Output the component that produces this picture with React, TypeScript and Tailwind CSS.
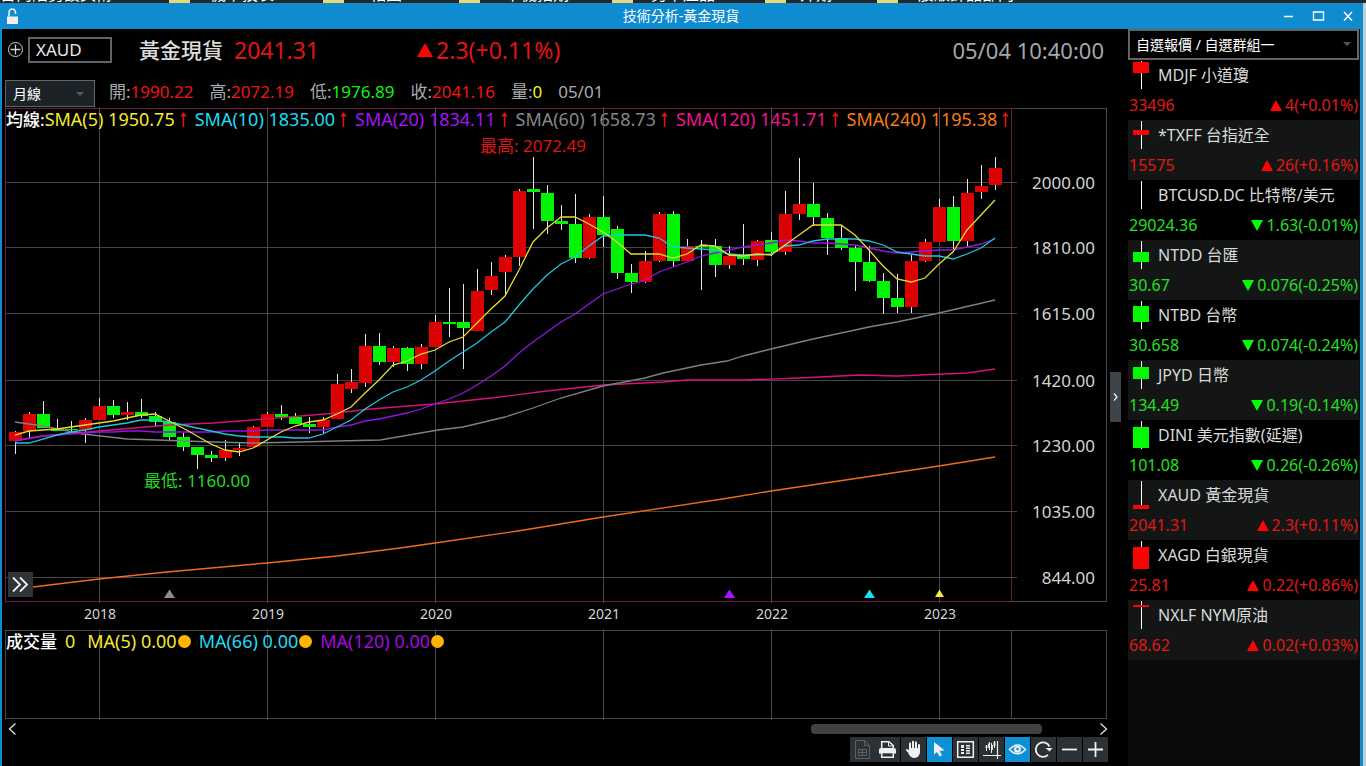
import React from "react";

type Candle = [up: 0 | 1, top: number, bottom: number, high: number, low: number];

const candles: Candle[] = [
  [1, 432, 441, 431, 454], [1, 414, 431, 412, 438], [0, 414, 428, 401, 428], [0, 429, 431, 419, 431],
  [0, 429, 430, 421, 433], [1, 420, 430, 418, 443], [1, 406, 420, 398, 420], [0, 406, 415, 400, 418],
  [1, 412, 415, 402, 420], [0, 412, 416, 399, 418], [0, 416, 422, 412, 427], [0, 422, 437, 418, 440],
  [0, 437, 447, 433, 451], [0, 447, 455, 447, 469], [0, 455, 458, 451, 462], [1, 450, 458, 440, 461],
  [1, 448, 450, 442, 456], [1, 427, 447, 426, 447], [1, 414, 427, 412, 427], [0, 414, 417, 405, 420],
  [0, 417, 424, 413, 424], [0, 424, 427, 417, 433], [1, 420, 427, 417, 433], [1, 384, 419, 374, 419],
  [1, 382, 389, 369, 393], [1, 346, 383, 334, 387], [0, 346, 362, 333, 365], [1, 348, 362, 346, 367],
  [0, 348, 364, 347, 371], [1, 347, 364, 344, 369], [1, 322, 347, 315, 347], [0, 322, 324, 288, 337],
  [0, 322, 328, 284, 369], [1, 291, 331, 269, 331], [1, 276, 290, 262, 295], [1, 257, 272, 255, 295],
  [1, 191, 257, 189, 266], [0, 189, 192, 157, 229], [0, 193, 221, 185, 234], [0, 221, 224, 205, 230],
  [0, 224, 258, 194, 263], [1, 217, 258, 214, 259], [0, 217, 235, 196, 247], [0, 229, 273, 226, 279],
  [0, 273, 282, 264, 293], [1, 261, 282, 251, 283], [1, 214, 261, 212, 262], [0, 214, 261, 211, 267],
  [1, 246, 261, 239, 261], [0, 246, 247, 240, 290], [0, 246, 265, 239, 277], [1, 256, 265, 246, 269],
  [0, 255, 259, 224, 265], [1, 241, 260, 240, 266], [0, 240, 252, 232, 256], [1, 214, 252, 191, 255],
  [1, 204, 214, 158, 220], [0, 204, 217, 183, 226], [0, 218, 238, 213, 255], [0, 238, 248, 225, 250],
  [0, 248, 262, 246, 291], [0, 262, 281, 246, 282], [0, 281, 298, 273, 314], [0, 298, 307, 274, 313],
  [1, 261, 307, 255, 313], [1, 242, 261, 239, 262], [1, 207, 242, 199, 242], [0, 207, 241, 196, 249],
  [1, 193, 241, 179, 247], [1, 186, 192, 165, 199], [1, 168, 185, 157, 190],
];

const barX = (i: number) => 15 + 14 * i;

const sma5 = [
  435, 431, 430, 429, 427, 425, 423, 421, 418, 415, 414, 421, 428, 436, 444, 450, 452, 448, 440, 432, 426, 422, 420,
  414, 407, 393, 380, 365, 361, 354, 350, 342, 337, 323, 309, 296, 270, 242, 228, 217, 217, 224, 232, 242, 254, 254,
  254, 258, 254, 245, 246, 255, 256, 254, 255, 245, 235, 225, 225, 225, 235, 250, 266, 279, 282, 278, 264, 252, 230,
  215, 200,
];
const sma10 = [
  443, 443, 439, 435, 432, 430, 427, 425, 423, 420, 420, 422, 425, 428, 431, 434, 436, 437, 437, 437, 438, 438, 434,
  427, 420, 409, 400, 392, 387, 380, 371, 361, 352, 343, 332, 322, 305, 289, 275, 264, 257, 246, 236, 235, 235, 235,
  238, 247, 248, 249, 250, 254, 255, 255, 254, 246, 245, 241, 239, 239, 239, 241, 245, 252, 254, 256, 256, 259, 254,
  248, 238,
];
const sma20 = [
  441, 438, 436, 435, 434, 433, 432, 432, 431, 431, 432, 432, 432, 432, 432, 431, 431, 431, 430, 430, 430, 430, 430,
  427, 425, 421, 419, 416, 413, 409, 404, 399, 393, 385, 376, 366, 353, 342, 332, 322, 314, 304, 294, 289, 284, 280,
  272, 267, 262, 256, 253, 250, 247, 245, 243, 240, 241, 243, 243, 244, 245, 248, 251, 253, 252, 251, 250, 250, 247,
  244, 239,
];

const perBar = (ys: number[]) => ys.map((y, i) => `${barX(i)},${y}`).join(" ");

const averages = [
  {
    color: "#f06c1c",
    points: "15,588 33,587 99,579 167,572 267,563 337,556 400,548 435,543 518,531 603,517 729,498 771,491 859,478 939,466 995,457",
  },
  {
    color: "#d4147c",
    points:
      "15,441 43,436 99,431 169,425 213,423 253,420 337,413 370,409 435,404 491,398 547,391 603,385 663,382 687,380 743,380 799,378 860,375 897,376 967,373 995,369",
  },
  {
    color: "#7d8184",
    points:
      "15,422 43,426 83,434 127,439 157,440 213,442 253,443 300,442 337,441 380,440 438,430 463,427 505,417 533,408 561,398 603,386 645,378 663,373 701,365 727,361 743,356 771,349 813,339 869,327 897,322 939,313 995,300",
  },
  { color: "#9415e0", points: perBar(sma20) },
  { color: "#22c4dc", points: perBar(sma10) },
  { color: "#e8dc32", points: perBar(sma5) },
];

const prices: [number, string][] = [
  [182, "2000.00"], [247, "1810.00"], [313, "1615.00"], [380, "1420.00"], [445, "1230.00"], [511, "1035.00"], [577, "844.00"],
];
const years: [number, string][] = [
  [99, "2018"], [267, "2019"], [435, "2020"], [603, "2021"], [771, "2022"], [939, "2023"],
];

const smaLegend = [
  { label: "SMA(5) 1950.75", style: "text-[#f5ea2e]" },
  { label: "SMA(10) 1835.00", style: "text-[#1edcf5]" },
  { label: "SMA(20) 1834.11", style: "text-[#a414f5]" },
  { label: "SMA(60) 1658.73", style: "text-[#84888a]" },
  { label: "SMA(120) 1451.71", style: "text-[#f0148c]" },
  { label: "SMA(240) 1195.38", style: "text-[#f57c14]" },
];

const volumeLegend = [
  { label: "MA(5) 0.00", style: "text-[#f5ea2e]" },
  { label: "MA(66) 0.00", style: "text-[#1edcf5]" },
  { label: "MA(120) 0.00", style: "text-[#a808e0]" },
];

const quotes = [
  { name: "MDJF 小道瓊", price: "33496", change: "4(+0.01%)", up: true, body: [2, 11] },
  { name: "*TXFF 台指近全", price: "15575", change: "26(+0.16%)", up: true, body: [10, 5] },
  { name: "BTCUSD.DC 比特幣/美元", price: "29024.36", change: "1.63(-0.01%)", up: false, body: [0, 0] },
  { name: "NTDD 台匯", price: "30.67", change: "0.076(-0.25%)", up: false, body: [12, 10] },
  { name: "NTBD 台幣", price: "30.658", change: "0.074(-0.24%)", up: false, body: [6, 16] },
  { name: "JPYD 日幣", price: "134.49", change: "0.19(-0.14%)", up: false, body: [7, 12] },
  { name: "DINI 美元指數(延遲)", price: "101.08", change: "0.26(-0.26%)", up: false, body: [7, 21] },
  { name: "XAUD 黃金現貨", price: "2041.31", change: "2.3(+0.11%)", up: true, body: [25, 4] },
  { name: "XAGD 白銀現貨", price: "25.81", change: "0.22(+0.86%)", up: true, body: [7, 22] },
  { name: "NXLF NYM原油", price: "68.62", change: "0.02(+0.03%)", up: true, body: [5, 2] },
];

const shortcuts = [
  { label: "台內陷勢設美術", style: "w-[169px]" },
  { label: "機下技表", style: "w-[133px] pl-[20px]" },
  { label: "相圖SC", style: "w-[115px] pl-[26px]" },
  { label: "下機指期", style: "w-[132px] pl-[25px]" },
  { label: "另下產品", style: "w-[132px] pl-[18px]" },
  { label: "外期", style: "w-[91px] pl-[14px]" },
  { label: "股版飾品部門", style: "w-[140px] pl-[20px]" },
];

function Triangle({ up, className }: { up: boolean; className: string }) {
  return (
    <svg viewBox="0 0 10 10" preserveAspectRatio="none" className={className} aria-hidden="true">
      <path d={up ? "M5 0 10 10H0Z" : "M0 0H10L5 10Z"} fill="currentColor" />
    </svg>
  );
}

function UpArrow() {
  return (
    <svg viewBox="0 0 9 15" className="h-[15px] w-[9px] text-[#f01010]" aria-hidden="true">
      <path d="M4.5 1V15M2 4.500 4.500 1.500 7 4.500" fill="none" stroke="currentColor" strokeWidth="1.500" />
    </svg>
  );
}

function PriceChart() {
  return (
    <svg viewBox="5 107 1103 519" className="block h-auto w-full" role="img" aria-label="黃金現貨 月線">
      <g shapeRendering="crispEdges" fill="none">
        <path d="M1011 108.500H1106.500V601.500H1011" stroke="#484a4a" />
        <path d="M5.500 108.500H1011.500V601.500H5.500Z" stroke="#6a1c4a" />
        {years.map(([x]) => (
          <path key={x} d={`M${x}.5 107V603`} stroke="#454646" />
        ))}
        {prices.map(([y]) => (
          <path key={y} d={`M6 ${y}.5H1017`} stroke="#454646" />
        ))}
      </g>
      <g shapeRendering="crispEdges">
        {candles.map(([up, top, bottom, high, low], i) => (
          <g key={i}>
            <rect x={barX(i)} y={high} width="1" height={low - high} fill="#e6e6e6" />
            <rect x={barX(i) - 6} y={top} width="13" height={bottom - top} fill={up ? "#dc0202" : "#00f404"} />
          </g>
        ))}
      </g>
      {averages.map((a) => (
        <polyline key={a.color} points={a.points} fill="none" stroke={a.color} strokeWidth="1.300" />
      ))}
      <path d="M169.500 589.500 175 598H164Z" fill="#8a8e91" />
      <path d="M729.500 589.500 735 598H724Z" fill="#b010ff" />
      <path d="M869.500 589.500 875 598H864Z" fill="#14e0f8" />
      <path d="M939.500 589.500 944 597H935Z" fill="#f5ea3c" />
      <g fontSize="17" fill="#d2d4d4" textAnchor="end">
        {prices.map(([y, label]) => (
          <text key={label} x="1095" y={y + 7}>{label}</text>
        ))}
      </g>
      <g fontSize="14" fill="#d2d4d4" textAnchor="middle">
        {years.map(([x, label]) => (
          <text key={label} x={x + 1} y="619">{label}</text>
        ))}
      </g>
      <g fontSize="17">
        <text x="480" y="152" fill="#dc1414">最高: 2072.49</text>
        <text x="144" y="487" fill="#22dc22">最低: 1160.00</text>
      </g>
    </svg>
  );
}

function VolumeChart() {
  return (
    <svg viewBox="5 629 1103 91" className="block h-auto w-full" aria-hidden="true">
      <g shapeRendering="crispEdges" fill="none" stroke="#454646">
        <path d="M5.500 630.500H1106.500V718.500H5.500Z" />
        {years.map(([x]) => (
          <path key={x} d={`M${x}.5 629V720`} />
        ))}
        <path d="M1011.500 630V718" />
      </g>
    </svg>
  );
}

const idle = "bg-[#2c3135] text-[#f0f0f0]";
const active = "bg-[#0d90d4] text-[#f0f0f0]";

const tools: { name: string; style: string; icon: React.ReactNode }[] = [
  {
    name: "匯出報表",
    style: "-mr-px bg-[#2c3135] text-[#5c6165]",
    icon: (
      <g fill="none" stroke="currentColor" strokeWidth="1">
        <path d="M5.500 3.500H14.500L19.500 8.500V21.500H5.500ZM14.500 3.500V8.500H19.500" />
        <path d="M8.500 12.500H16.500V18.500H8.500ZM12.500 12.500V18.500M8.500 15.500H16.500" />
      </g>
    ),
  },
  {
    name: "列印",
    style: idle,
    icon: (
      <g>
        <path d="M6.700 11V4.700H14L18.300 8.500V11" fill="none" stroke="currentColor" strokeWidth="1.500" />
        <path d="M13.500 4.500V9H18" fill="none" stroke="currentColor" />
        <path d="M4 16.500V13Q4 11 6 11H19Q21 11 21 13V16.500Z" fill="currentColor" />
        <path d="M6.700 15.500H18.300V20.300H6.700Z" fill="#2c3135" stroke="currentColor" strokeWidth="1.500" />
        <path d="M4 15.300H21" stroke="currentColor" strokeWidth="1.600" />
      </g>
    ),
  },
  {
    name: "拖曳",
    style: idle,
    icon: (
      <g fill="none" stroke="currentColor" strokeWidth="2" strokeLinecap="round" strokeLinejoin="round">
        <path d="M9 13V6.500M12 12V4.800M15 12V5.500M18 13V8M6 13 9.500 16.500" />
        <path d="M9 12H18V15C18 18 16 20 13.500 20C11 20 9.500 18.500 8.500 16.500Z" fill="currentColor" />
      </g>
    ),
  },
  {
    name: "選取",
    style: active,
    icon: <path d="M7 5V17.500L10 15 12.500 19.500 15 18.300 12.700 14 17.500 13.300Z" fill="currentColor" />,
  },
  {
    name: "資訊視窗",
    style: idle,
    icon: (
      <g>
        <path d="M4.700 4.700H20.300V20.300H4.700Z" fill="none" stroke="currentColor" strokeWidth="1.500" />
        <path d="M8 8H11V11H8ZM8 12H11V14H8ZM8 15H11V17H8ZM13 8H17V9.500H13ZM13 10.500H17V12H13ZM13 13H17V14.500H13ZM13 15.500H17V17H13Z" fill="currentColor" />
      </g>
    ),
  },
  {
    name: "十字線",
    style: idle,
    icon: (
      <g fill="none" stroke="currentColor">
        <path d="M4 18.500H22M18.500 4V22" strokeWidth="1.200" />
        <path d="M7.500 8V14M10.500 5V13M12.500 6V16M15.500 4V11" strokeWidth="1" />
        <path d="M7.500 8.500V11M10 6.500V11M13 8V13M15.500 5V9" strokeWidth="1.800" />
      </g>
    ),
  },
  {
    name: "顯示",
    style: active,
    icon: (
      <g>
        <path d="M4.500 12.500Q12.500 3.500 20.500 12.500Q12.500 21 4.500 12.500Z" fill="none" stroke="currentColor" strokeWidth="1.600" />
        <circle cx="12.500" cy="12.300" r="3.500" fill="currentColor" />
        <circle cx="12.500" cy="12" r="1.300" fill="#0d90d4" />
      </g>
    ),
  },
  {
    name: "重新整理",
    style: idle,
    icon: (
      <g>
        <path d="M17 17.800A7.200 7.200 0 1 1 18.500 9.500" fill="none" stroke="currentColor" strokeWidth="1.800" />
        <path d="M14.500 11H21.500L18.500 14.500Z" fill="currentColor" />
      </g>
    ),
  },
  {
    name: "縮小",
    style: idle,
    icon: <path d="M5 12.500H20" fill="none" stroke="currentColor" strokeWidth="1.800" />,
  },
  {
    name: "放大",
    style: idle,
    icon: <path d="M5 12.500H20M12.500 5V20" fill="none" stroke="currentColor" strokeWidth="1.800" />,
  },
];

function TitleBar() {
  return (
    <header className="grid h-[26px] grid-cols-3 items-center bg-[#0e8ccf] text-white">
      <button type="button" aria-label="鎖定視窗" className="ml-[4px] w-[13px]">
        <svg viewBox="0 0 13 17" className="block h-[17px] w-[13px]">
          <path d="M3 8.500V4.500A3.200 3.500 0 0 1 9.500 4.500V6" fill="none" stroke="#f0f0f0" strokeWidth="1.600" />
          <path d="M1 8.500H12V16H1Z" fill="#f0f0f0" />
        </svg>
      </button>
      <h1 className="pb-px text-center text-[14px] leading-[20px]">技術分析-黃金現貨</h1>
      <div className="flex items-center justify-end gap-4 pr-[4px]">
        <button type="button" aria-label="最小化">
          <svg viewBox="0 0 14 14" className="block size-[14px]"><path d="M2 7.500H11" stroke="#fff" strokeWidth="1.500" /></svg>
        </button>
        <button type="button" aria-label="最大化">
          <svg viewBox="0 0 14 14" className="block size-[14px]"><path d="M1.500 3H11.500V11H1.500Z" fill="none" stroke="#fff" strokeWidth="1.300" /></svg>
        </button>
        <button type="button" aria-label="關閉">
          <svg viewBox="0 0 14 14" className="block size-[14px]"><path d="M2 3 10 11.500M10 3 2 11.500" stroke="#fff" strokeWidth="1.500" /></svg>
        </button>
      </div>
    </header>
  );
}

function Ohlc({ label, value, style }: { label: string; value: string; style: string }) {
  return (
    <div className="flex">
      <dt className="text-[#a8acae]">{label}:</dt>
      <dd className={style}>{value}</dd>
    </div>
  );
}

function Watchlist() {
  return (
    <aside className="w-[232px] shrink-0 bg-[#090a0a] pr-px">
      <div className="relative">
        <select aria-label="自選群組" className="block h-[31px] w-full appearance-none border-2 border-[#606467] bg-black px-[6px] text-[14px] text-white">
          <option>自選報價 / 自選群組一</option>
        </select>
        <Triangle up={false} className="pointer-events-none absolute top-[13px] right-[8px] h-[4px] w-[8px] text-[#4c5c66]" />
      </div>
      <ul>
        {quotes.map((q) => (
          <li key={q.name} className="h-[60px] bg-black text-[16px] leading-[30px] even:bg-[#131615]">
            <div className="flex items-center gap-[9px] pl-[5px] text-[#d8dada]">
              <svg viewBox="0 0 16 30" className="h-[30px] w-[16px]" shapeRendering="crispEdges" aria-hidden="true">
                <rect x="8" y="1" width="1" height="28" fill="#fff" />
                <rect x="0" y={q.body[0]} width="16" height={q.body[1]} fill={q.up ? "#f80404" : "#04f804"} />
              </svg>
              <span>{q.name}</span>
            </div>
            <div className={q.up ? "flex justify-between px-px text-[#e01818]" : "flex justify-between px-px text-[#22e022]"}>
              <span>{q.price}</span>
              <span className="flex items-center gap-[3px]">
                <Triangle up={q.up} className={q.up ? "h-[11px] w-[12px] text-[#ff0404]" : "h-[11px] w-[12px] text-[#04ff04]"} />
                {q.change}
              </span>
            </div>
          </li>
        ))}
      </ul>
    </aside>
  );
}

export default function App() {
  return (
    <div className="flex min-h-screen flex-col bg-[#24282b] font-['Noto_Sans','Noto_Sans_CJK_TC',sans-serif] text-white">
      <nav className="flex h-[3px] items-end overflow-hidden text-[16px] leading-[18px]">
        {shortcuts.map((s, i) => (
          <React.Fragment key={s.label}>
            <span className={`shrink-0 whitespace-nowrap ${s.style}`}>{s.label}</span>
            {i < shortcuts.length - 1 && <span className="h-[3px] w-[21px] shrink-0 bg-[#e8d878]" />}
          </React.Fragment>
        ))}
      </nav>
      <div className="flex flex-1 flex-col border-r-3 border-[#c4ccd6]">
        <div className="flex flex-1 flex-col border-r-3 border-l-2 border-[#0e8ccf] bg-black">
          <TitleBar />
          <div className="flex flex-1">
            <main className="relative flex min-w-0 flex-1 flex-col pr-[20px] pl-[3px]">
              <section className="flex h-[51px] items-center pb-[10px] pr-[4px] text-[23px] leading-[30px]">
                <button type="button" aria-label="新增商品" className="ml-[2px]">
                  <svg viewBox="0 0 17 17" className="block size-[17px]" fill="none" stroke="#d0d0d0">
                    <circle cx="8.500" cy="8.500" r="7" />
                    <path d="M3.500 8.500H13.500M8.500 3.500V13.500" strokeWidth="1.300" />
                  </svg>
                </button>
                <input aria-label="商品代碼" defaultValue="XAUD" className="ml-[4px] h-[26px] w-[84px] border-2 border-[#606467] bg-black px-[6px] text-[17px] text-[#e8e8e8]" />
                <strong className="ml-[27px] text-[21px] font-medium text-[#dcdcdc]">黃金現貨</strong>
                <span className="ml-[11px] text-[#e01414]">2041.31</span>
                <span className="ml-[98px] flex items-center gap-[3px] text-[#e01414]">
                  <Triangle up className="h-[14px] w-[16px] text-[#ff0404]" />
                  2.3(+0.11%)
                </span>
                <time className="ml-auto text-[22px] text-[#a4a8aa]">05/04 10:40:00</time>
              </section>
              <section className="flex h-[27px] items-center gap-[14px]">
                <div className="relative">
                  <select aria-label="週期" className="block h-[27px] w-[90px] appearance-none border border-[#606467] bg-[#1c2226] px-[7px] text-[14px] text-white">
                    <option>月線</option>
                  </select>
                  <Triangle up={false} className="pointer-events-none absolute top-[12px] right-[11px] h-[4px] w-[8px] text-[#4c6474]" />
                </div>
                <dl className="flex gap-[16px] pb-[3px] text-[17px] leading-[24px]">
                  <Ohlc label="開" value="1990.22" style="text-[#f01414]" />
                  <Ohlc label="高" value="2072.19" style="text-[#f01414]" />
                  <Ohlc label="低" value="1976.89" style="text-[#14f014]" />
                  <Ohlc label="收" value="2041.16" style="text-[#f01414]" />
                  <Ohlc label="量" value="0" style="text-[#f8f014]" />
                  <dd className="text-[#a8acae]">05/01</dd>
                </dl>
              </section>
              <figure className="relative">
                <PriceChart />
                <figcaption className="absolute top-0 left-px flex items-center whitespace-nowrap text-[18px] leading-[25px]">
                  <span className="text-[17px] font-medium">均線:</span>
                  <span className="flex gap-[7px]">
                    {smaLegend.map((s) => (
                      <span key={s.label} className={`flex items-center gap-[4px] ${s.style}`}>
                        {s.label}
                        <UpArrow />
                      </span>
                    ))}
                  </span>
                </figcaption>
                <button type="button" aria-label="展開工具列" className="absolute bottom-[29px] left-[3px] bg-[#2f3438]">
                  <svg viewBox="0 0 25 25" className="block size-[25px]">
                    <path d="M5 5.500 12 12.500 5 19.500M12 5.500 19 12.500 12 19.500" fill="none" stroke="#f0f0f0" strokeWidth="1.800" />
                  </svg>
                </button>
              </figure>
              <figure className="relative mt-[3px]">
                <VolumeChart />
                <figcaption className="absolute top-0 left-px flex items-center gap-[8px] whitespace-nowrap text-[18px] leading-[25px]">
                  <span className="text-[17px] font-medium">成交量</span>
                  <span className="mr-[4px] text-[#f5ea2e]">0</span>
                  {volumeLegend.map((v) => (
                    <span key={v.label} className={`flex items-center gap-px ${v.style}`}>
                      {v.label}
                      <span className="size-[13px] rounded-full bg-[#ffb400]" />
                    </span>
                  ))}
                </figcaption>
              </figure>
              <div className="flex h-[17px] items-center justify-between">
                <button type="button" aria-label="向左捲動" className="ml-[2px]">
                  <svg viewBox="0 0 10 14" className="block h-[14px] w-[10px]"><path d="M8.500 1.500 2.500 7 8.500 12.500" fill="none" stroke="#e0e0e0" strokeWidth="1.300" /></svg>
                </button>
                <div className="flex flex-1 justify-end pr-[56px]">
                  <div className="h-[10px] w-[231px] rounded-[4px] bg-[#404242]" />
                </div>
                <button type="button" aria-label="向右捲動">
                  <svg viewBox="0 0 10 14" className="block h-[14px] w-[10px]"><path d="M2.500 1.500 8.500 7 2.500 12.500" fill="none" stroke="#e0e0e0" strokeWidth="1.300" /></svg>
                </button>
              </div>
              <div className="flex justify-end gap-px">
                {tools.map((t) => (
                  <button key={t.name} type="button" aria-label={t.name} className={t.style}>
                    <svg viewBox="0 0 25 25" className="block size-[25px]">{t.icon}</svg>
                  </button>
                ))}
              </div>
              <button type="button" aria-label="收合報價" className="absolute top-[343px] right-[7px] h-[50px] w-[11px] bg-[#3f4448]">
                <svg viewBox="0 0 11 50" className="block h-[50px] w-[11px]"><path d="M4 21.500 7 25 4 28.500" fill="none" stroke="#f0f0f0" strokeWidth="1.300" /></svg>
              </button>
            </main>
            <Watchlist />
          </div>
        </div>
      </div>
    </div>
  );
}
